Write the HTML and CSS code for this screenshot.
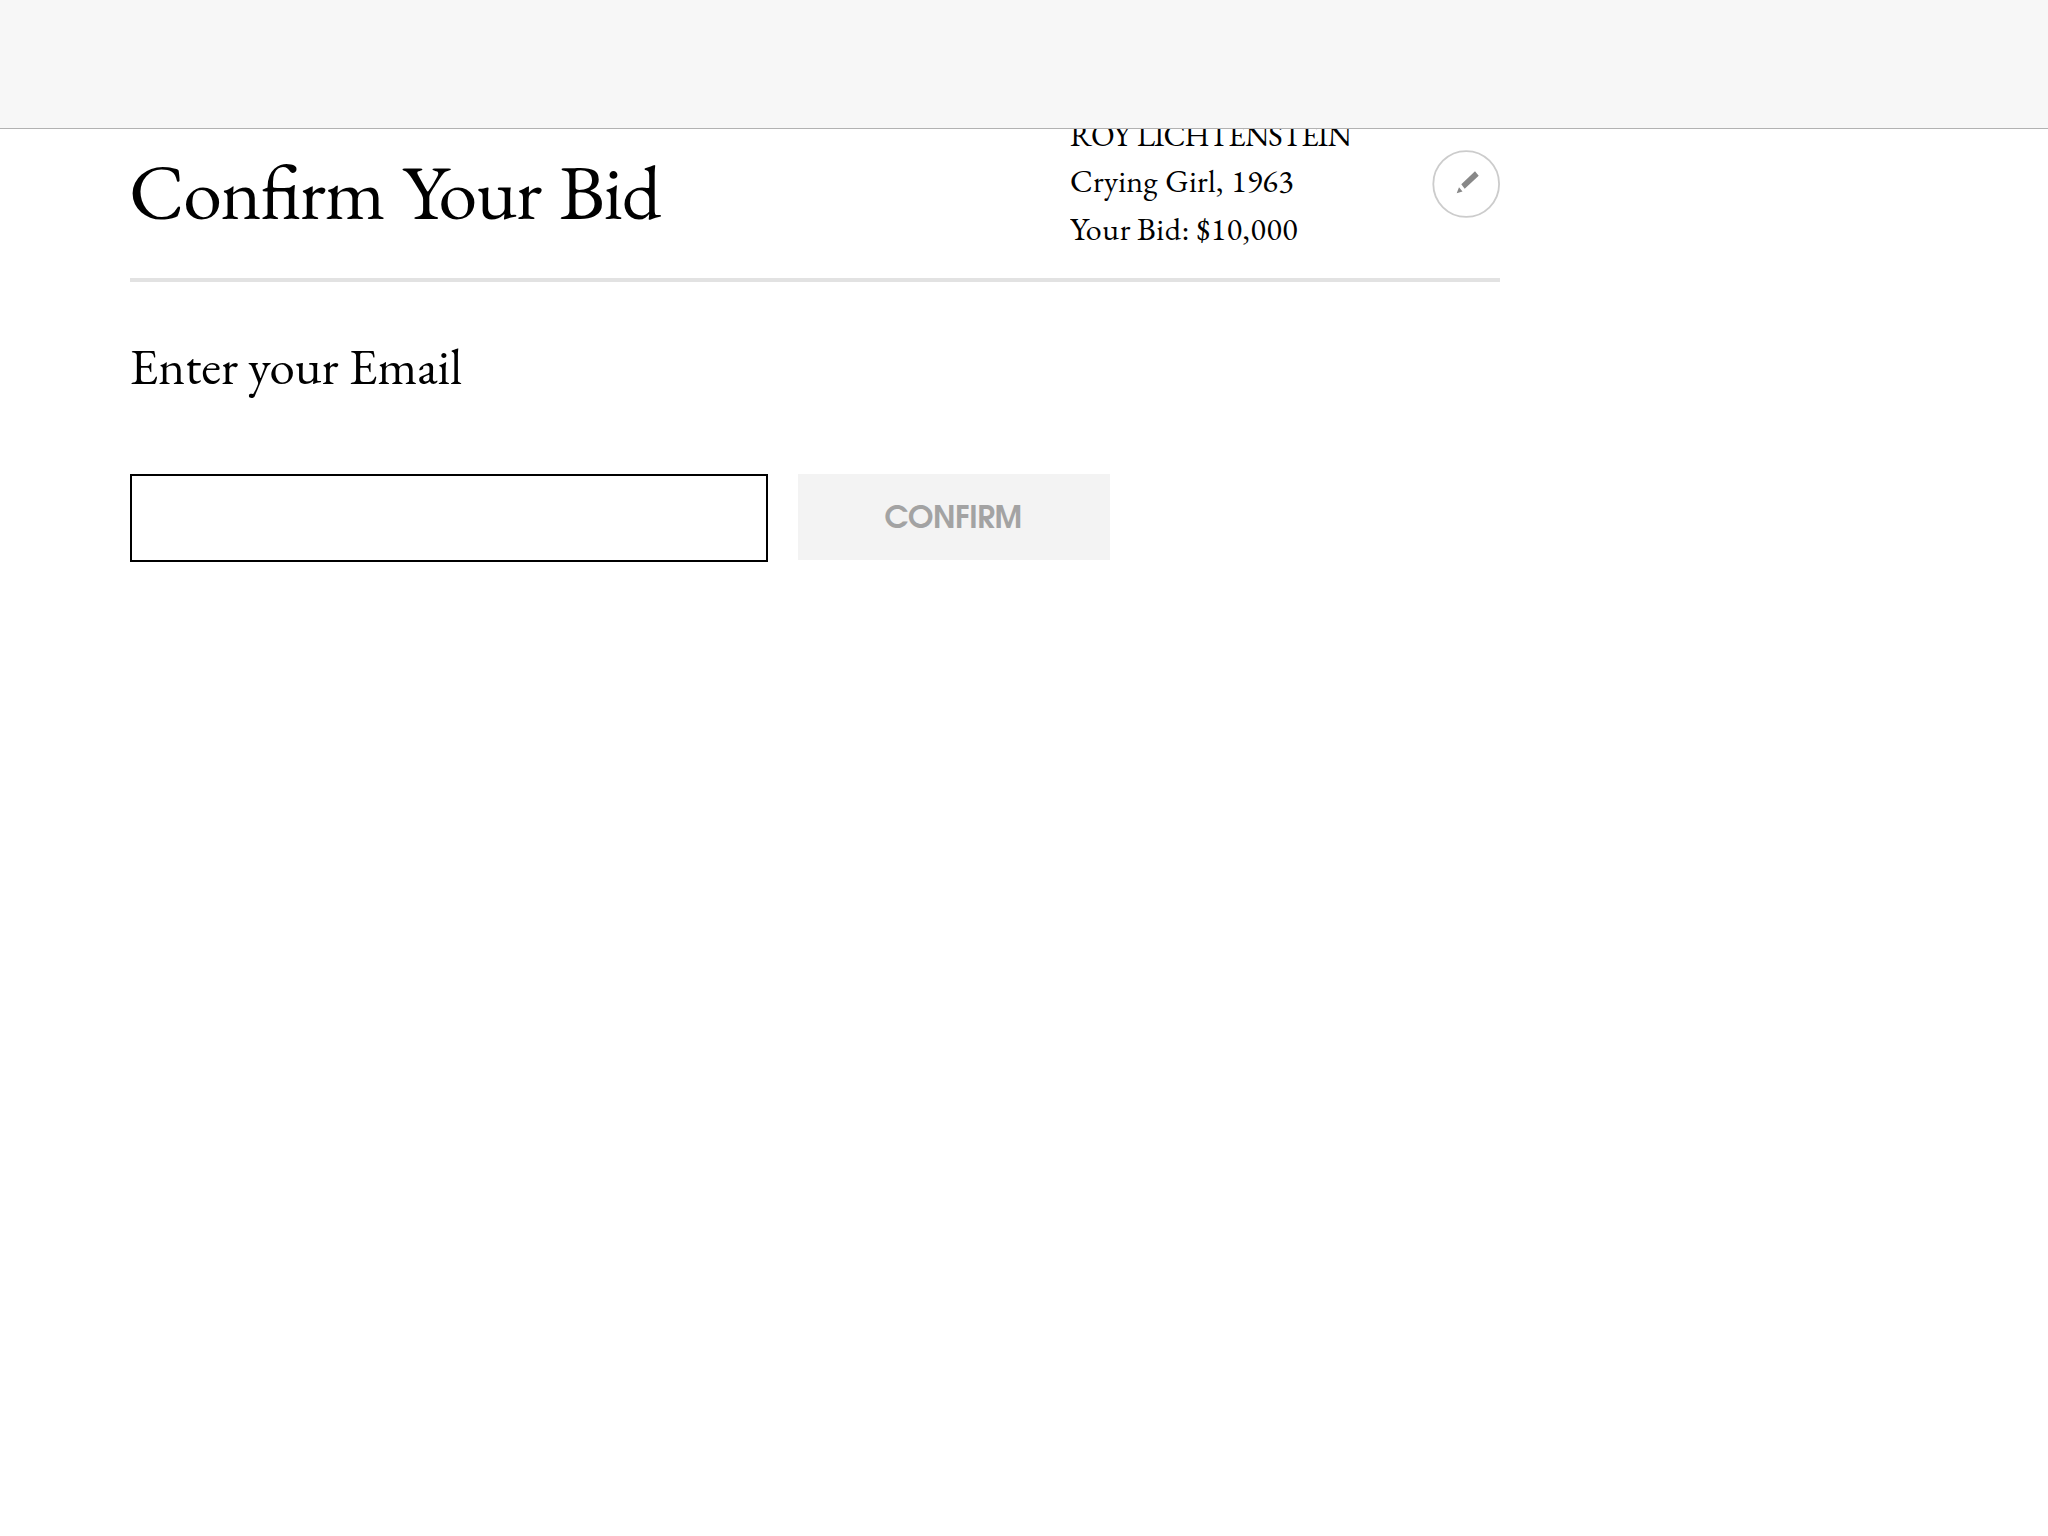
FILE: index.html
```html
<!DOCTYPE html>
<html lang="en">
<head>
<meta charset="utf-8">
<title>Confirm Your Bid</title>
<link rel="stylesheet" href="styles.css">
</head>
<body>
<header class="topbar"></header>
<main class="page">
  <section class="summary">
    <h1 class="title">Confirm Your Bid</h1>
    <div class="lot">
      <div class="artist">ROY LICHTENSTEIN</div>
      <div class="work">Crying Girl, 1963</div>
      <div class="bid">Your Bid: $10,000</div>
    </div>
    <button class="edit" aria-label="Edit bid">
      <svg width="68" height="68" viewBox="0 0 68 68"><circle cx="34.2" cy="34" r="32.9" fill="none" stroke="#ccc" stroke-width="1.8"/><path d="M29.3 34.3L43 21.3L46.7 25.7L32.7 38.7ZM27 37.3L30.5 41.5L24.7 43.3Z" fill="#888"/></svg>
    </button>
  </section>
  <h2 class="prompt">Enter your Email</h2>
  <form class="form">
    <input class="email" type="email" aria-label="Email">
    <button class="confirm" type="button">CONFIRM</button>
  </form>
</main>
</body>
</html>
```

FILE: styles.css
```css
* { box-sizing: border-box; }
body {
  margin: 0;
  height: 1536px;
  overflow: hidden;
  background: #fff;
  color: #000;
  font-family: "EB Garamond", "Liberation Serif", serif;
}
.topbar {
  height: 129px;
  background: #f7f7f7;
  border-bottom: 1px solid #b2b2b2;
}
.page { width: 1370px; margin-left: 130px; }
.summary {
  display: flex;
  height: 153px;
  border-bottom: 4px solid #e2e2e2;
}
.title {
  width: 940px;
  margin: 17px 0 0;
  font-size: 78px;
  line-height: 90px;
  font-weight: 400;
  letter-spacing: -1.2px;
  word-spacing: 4px;
  text-indent: -1px;
  font-feature-settings: "liga" 1;
  white-space: nowrap;
}
.lot {
  width: 362px;
  height: 149px;
  display: flex;
  flex-direction: column;
  justify-content: flex-end;
  padding-bottom: 25px;
  overflow: hidden;
  font-size: 32px;
  line-height: 48px;
  white-space: nowrap;
}
.artist { font-size: 31px; line-height: 45px; letter-spacing: -1.05px; word-spacing: 2px; }
.work { line-height: 47px; letter-spacing: 0.27px; word-spacing: 1px; }
.bid { letter-spacing: 0.55px; word-spacing: -0.8px; }
.edit {
  width: 68px;
  height: 68px;
  margin-top: 21px;
  padding: 0;
  border: 0;
  background: none;
}
.edit svg { display: block; }
.prompt {
  margin: 54px 0 0;
  font-size: 51px;
  line-height: 60px;
  font-weight: 400;
  text-indent: -0.5px;
}
.form { display: flex; gap: 30px; align-items: flex-start; margin-top: 78px; }
.email {
  width: 638px;
  height: 88px;
  padding: 0 20px;
  border: 2px solid #000;
  border-radius: 0;
  background: #fff;
  font: inherit;
  font-size: 32px;
}
.confirm {
  width: 312px;
  height: 86px;
  padding: 4px 2px 0 0;
  border: 0;
  background: #f3f3f3;
  color: #a3a3a3;
  font: 700 30.5px "ITC Avant Garde Gothic", "URW Gothic", "TeX Gyre Adventor", Lato, sans-serif;
  letter-spacing: -0.5px;
}
```
